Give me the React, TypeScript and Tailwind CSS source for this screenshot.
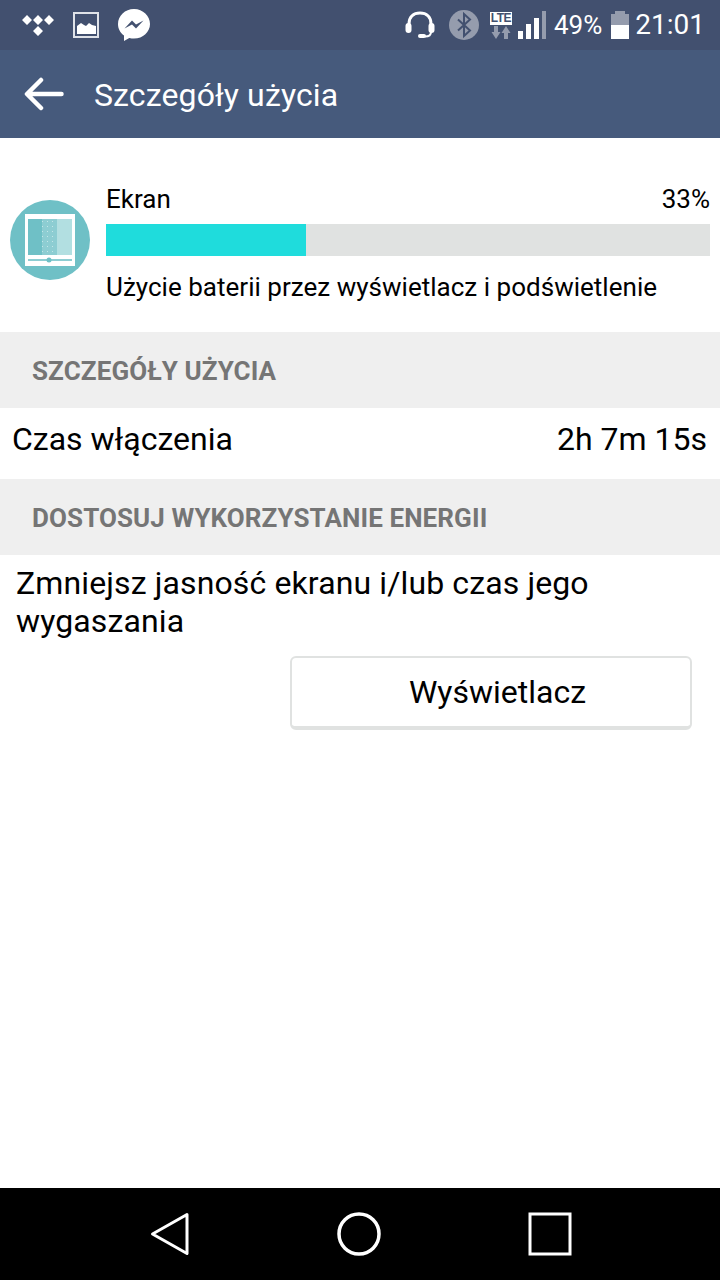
import React from 'react';

const TidalIcon = () => (
  <svg width="32" height="22" viewBox="0 0 32 22" fill="#fff">
    <path d="M0 6 5 1l5 5-5 5zM11 6l5-5 5 5-5 5zM22 6l5-5 5 5-5 5zM11 17l5-5 5 5-5 5z" />
  </svg>
);

const ImageIcon = () => (
  <svg width="26" height="26" viewBox="0 0 26 26">
    <rect x="1" y="1" width="24" height="24" fill="none" stroke="#dfe2e8" strokeWidth="2" />
    <path d="M4 22v-8l4-3 3 2 2 1 3-3 3 2 4 1v8z" fill="#fff" />
  </svg>
);

const MessengerIcon = () => (
  <svg width="32" height="32" viewBox="0 0 32 32">
    <path d="M16 0C7 0 0 6.800 0 15c0 4.700 2.300 8.900 6 11.600V32l5.300-3c1.500.4 3.100.6 4.700.6 9 0 16-6.700 16-14.600S25 0 16 0z" fill="#fff" />
    <path d="M6.500 19.500 14 11.500l4 4 7.500-4-7.500 8-4-4z" fill="#42506f" />
  </svg>
);

const HeadsetIcon = () => (
  <svg width="30" height="28" viewBox="0 0 30 28" fill="none">
    <path d="M4 15V13C4 6 8.500 2 15 2s11 4 11 11v2" stroke="#fff" strokeWidth="3" />
    <rect x="0.500" y="12" width="6" height="10" rx="3" fill="#fff" />
    <rect x="23.500" y="12" width="6" height="10" rx="3" fill="#fff" />
    <path d="M26 21c0 3-2 4.500-6 4.500" stroke="#fff" strokeWidth="2" />
    <rect x="13" y="23" width="8" height="4" rx="2" fill="#fff" />
  </svg>
);

const BluetoothIcon = () => (
  <svg width="30" height="30" viewBox="0 0 30 30" fill="none">
    <circle cx="15" cy="15" r="15" fill="#959cad" />
    <path d="m9 9.500 12 11-6 5.500V4l6 5.500-12 11" stroke="#42506f" strokeWidth="2" />
  </svg>
);

const LteIcon = () => (
  <div className="flex w-[22px] flex-col items-center">
    <div className="flex h-[13px] w-[22px] items-center justify-center bg-white font-['Liberation_Sans',sans-serif] text-[12px] leading-none font-bold tracking-[-0.5px] text-[#42506f]">
      LTE
    </div>
    <svg width="20" height="13" viewBox="0 0 20 13" fill="#959cad" className="mt-px">
      <path d="M3 0h4v6h2.500L5 13 .5 6H3zM13 13h4V7h2.500L15 0l-4.500 7H13z" />
    </svg>
  </div>
);

const SignalIcon = () => (
  <div className="flex h-[28px] items-end gap-[3px]">
    <div className="h-[8px] w-[5px] bg-white" />
    <div className="h-[15px] w-[5px] bg-white" />
    <div className="h-[21px] w-[5px] bg-white" />
    <div className="h-[28px] w-[4px] bg-[#959cad]" />
  </div>
);

const BatteryIcon = () => (
  <div className="flex w-[18px] flex-col items-center">
    <div className="h-[3px] w-[10px] bg-[#959cad]" />
    <div className="h-[11px] w-[18px] bg-[#959cad]" />
    <div className="h-[14px] w-[18px] bg-white" />
  </div>
);

const SectionHeader = ({ label }: { label: string }) => (
  <div className="flex h-[76px] items-center bg-[#efefef] pl-8 pt-[3px] text-[26px] font-bold tracking-[0.1px] text-[#757575]">
    {label}
  </div>
);

export default function App() {
  return (
    <div className="flex h-[1280px] w-[720px] flex-col overflow-hidden bg-white font-['Roboto',sans-serif] text-black">
      {/* status bar */}
      <div className="flex h-[50px] items-center bg-[#42506f] pr-[15px] text-white">
        <div className="ml-[22px]"><TidalIcon /></div>
        <div className="ml-[19px]"><ImageIcon /></div>
        <div className="ml-[19px]"><MessengerIcon /></div>
        <div className="ml-auto"><HeadsetIcon /></div>
        <div className="ml-[14px]"><BluetoothIcon /></div>
        <div className="ml-[11px]"><LteIcon /></div>
        <div className="ml-[6px]"><SignalIcon /></div>
        <span className="ml-[8px] text-[26px] leading-none">49%</span>
        <div className="ml-[9px]"><BatteryIcon /></div>
        <span className="ml-[6px] text-[28px] leading-none">21:01</span>
      </div>

      {/* app bar */}
      <div className="flex h-[88px] items-center bg-[#465a7c] text-white">
        <svg className="ml-[24px]" width="40" height="34" viewBox="0 0 40 34" fill="none">
          <path d="M37.500 17H4M17 3 3 17l14 14" stroke="#fff" strokeWidth="4.500" strokeLinecap="round" strokeLinejoin="round" />
        </svg>
        <span className="ml-[30px] pt-[2px] text-[32px] tracking-[0.12px]">Szczegóły użycia</span>
      </div>

      {/* usage */}
      <div className="flex h-[194px] pt-[46px]">
        <div className="ml-[10px] mt-[16px] flex h-[80px] w-[80px] items-center justify-center rounded-full bg-[#6fc0c6]">
          <svg width="50" height="52" viewBox="0 0 50 52">
            <defs>
              <pattern id="dots" width="5" height="5" patternUnits="userSpaceOnUse">
                <rect width="5" height="5" fill="#8dcdd2" />
                <rect x="2" y="2" width="1" height="1" fill="#c4e6e8" />
              </pattern>
            </defs>
            <rect x="0" y="0" width="50" height="52" fill="#fff" />
            <rect x="3" y="5" width="14" height="36" fill="#6fc0c6" />
            <rect x="17" y="5" width="15" height="36" fill="url(#dots)" />
            <rect x="32" y="5" width="15" height="36" fill="#b2dfe1" />
            <rect x="3" y="45" width="44" height="2" fill="#8dcdd2" />
            <circle cx="24" cy="46" r="2.500" fill="#6fc0c6" />
          </svg>
        </div>
        <div className="ml-[16px] w-[604px]">
          <div className="flex h-[30px] items-center justify-between text-[26px]">
            <span>Ekran</span>
            <span>33%</span>
          </div>
          <div className="mt-[10px] h-[32px] w-full bg-[#e0e2e1]">
            <div className="h-full w-[200px] bg-[#1fdcdc]" />
          </div>
          <div className="mt-[12px] text-[26px] leading-[38px] tracking-[0.02px]">Użycie baterii przez wyświetlacz i podświetlenie</div>
        </div>
      </div>

      <SectionHeader label="SZCZEGÓŁY UŻYCIA" />

      <div className="flex h-[71px] items-center justify-between pb-[10px] pl-[12px] pr-[13px] text-[32px]">
        <span>Czas włączenia</span>
        <span>2h 7m 15s</span>
      </div>

      <SectionHeader label="DOSTOSUJ WYKORZYSTANIE ENERGII" />

      <div className="flex-1 px-4 pt-[9px]">
        <p className="text-[32px] leading-[38px] tracking-[0.12px]">Zmniejsz jasność ekranu i/lub czas jego wygaszania</p>
        <div className="mt-[16px] flex justify-end pr-[12px]">
          <button className="flex h-[74px] w-[402px] items-center justify-center rounded-[6px] border-2 border-b-4 border-[#e0e2e1] bg-white pl-[13px] text-[32px]">
            Wyświetlacz
          </button>
        </div>
      </div>

      {/* nav bar */}
      <div className="flex h-[92px] items-center bg-black">
        <svg className="ml-[150px]" width="40" height="44" viewBox="0 0 40 44" fill="none">
          <path d="M37 2.500 2.500 22 37 41.500z" stroke="#fff" strokeWidth="3" strokeLinejoin="round" />
        </svg>
        <svg className="ml-[147px]" width="44" height="44" viewBox="0 0 44 44" fill="none">
          <circle cx="22" cy="22" r="20" stroke="#fff" strokeWidth="3.500" />
        </svg>
        <svg className="ml-[147px]" width="44" height="44" viewBox="0 0 44 44" fill="none">
          <rect x="2" y="2" width="40" height="40" stroke="#fff" strokeWidth="3" />
        </svg>
      </div>
    </div>
  );
}
